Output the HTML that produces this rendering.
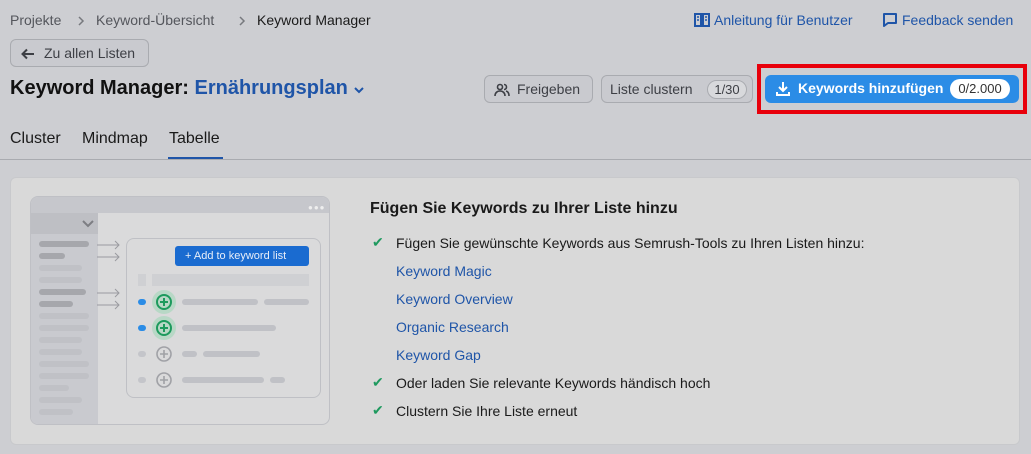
<!DOCTYPE html>
<html><head><meta charset="utf-8"><style>
*{box-sizing:border-box;margin:0;padding:0}
body{width:1031px;height:454px;background:#cdced2;font-family:"Liberation Sans",sans-serif;color:#1a1a1a;position:relative;overflow:hidden}
.a{position:absolute;white-space:nowrap}
.bc{font-size:14px;color:#54565c;top:12px}
.btn{position:absolute;border:1px solid #a9abb0;border-radius:6px;background:#c9cacf;font-size:14px;color:#3d3f45}
.chk{color:#1f9a5f;font-size:14px}
.lnk{color:#1f55a8;font-size:14px}
.bar{position:absolute;height:6px;border-radius:3px;background:#c0c1c6}
.dk{background:#a6a7ac}
</style></head><body>
<div class="a bc" style="left:10px">Projekte</div>
<svg class="a" style="left:77px;top:15px" width="8" height="12"><path d="M2 2l4 4-4 4" fill="none" stroke="#77797e" stroke-width="1.5"/></svg>
<div class="a bc" style="left:96px">Keyword-Übersicht</div>
<svg class="a" style="left:238px;top:15px" width="8" height="12"><path d="M2 2l4 4-4 4" fill="none" stroke="#77797e" stroke-width="1.5"/></svg>
<div class="a bc" style="left:257px;color:#1a1a1a">Keyword Manager</div>
<svg class="a" style="left:694px;top:12px" width="16" height="16" viewBox="0 0 16 16"><path d="M1 2h6v12H1zM9 2h6v12H9z" fill="none" stroke="#1f55a8" stroke-width="2"/><path d="M3 5h2M3 8h2M11 5h2M11 8h2" stroke="#1f55a8" stroke-width="1.5"/></svg>
<div class="a lnk" style="left:714px;top:12px">Anleitung für Benutzer</div>
<svg class="a" style="left:882px;top:12px" width="16" height="16" viewBox="0 0 16 16"><path d="M2 2h12v9H6l-4 3z" fill="none" stroke="#1f55a8" stroke-width="2" stroke-linejoin="round"/></svg>
<div class="a lnk" style="left:902px;top:12px">Feedback senden</div>
<div class="btn" style="left:10px;top:39px;width:139px;height:28px"><svg class="a" style="left:9px;top:6px" width="16" height="16" viewBox="0 0 16 16"><path d="M14 8H3M7 3.5L2.5 8 7 12.5" fill="none" stroke="#3d3f45" stroke-width="2"/></svg><span class="a" style="left:33px;top:5px">Zu allen Listen</span></div>
<div class="a" style="left:10px;top:77px;font-size:20px;font-weight:bold;color:#111">Keyword Manager: <span style="color:#1f55a8">Ernährungsplan</span></div>
<svg class="a" style="left:353px;top:85px" width="12" height="10"><path d="M2 3l4 4 4-4" fill="none" stroke="#1f55a8" stroke-width="2"/></svg>
<div class="btn" style="left:484px;top:75px;width:109px;height:28px"><svg class="a" style="left:9px;top:6px" width="16" height="16" viewBox="0 0 16 16" fill="none" stroke="#3d3f45" stroke-width="1.6"><circle cx="6" cy="5" r="2.5"/><path d="M1 14c0-3 2-5 5-5s5 2 5 5M10 2.5a2.5 2.5 0 010 5M12 9c2 .5 3 2.5 3 5"/></svg><span class="a" style="left:32px;top:5px">Freigeben</span></div>
<div class="btn" style="left:601px;top:75px;width:152px;height:28px"><span class="a" style="left:8px;top:5px">Liste clustern</span><span class="a" style="left:105px;top:4px;width:40px;height:19px;border:1px solid #a9abb0;border-radius:10px;background:#d8d9dc;font-size:13px;text-align:center;line-height:17px">1/30</span></div>
<div class="a" style="left:757px;top:64px;width:270px;height:50px;border:4px solid #e8000b"></div>
<div class="a" style="left:765px;top:75px;width:254px;height:28px;background:#2b8ce6;border-radius:6px"><svg class="a" style="left:10px;top:6px" width="16" height="16" viewBox="0 0 16 16" fill="none" stroke="#fff" stroke-width="2"><path d="M8 1v9M4 6l4 4 4-4M2 11v3h12v-3"/></svg><span class="a" style="left:33px;top:5px;color:#fff;font-weight:bold;font-size:14px">Keywords hinzufügen</span><span class="a" style="left:185px;top:4px;width:60px;height:20px;background:#fff;border-radius:10px;font-size:13px;text-align:center;line-height:20px;color:#333">0/2.000</span></div>
<div class="a" style="left:10px;top:130px;font-size:16px">Cluster</div>
<div class="a" style="left:82px;top:130px;font-size:16px">Mindmap</div>
<div class="a" style="left:169px;top:130px;font-size:16px">Tabelle</div>
<div class="a" style="left:168px;top:157px;width:55px;height:3px;background:#1f55a8"></div>
<div class="a" style="left:0;top:159px;width:1031px;height:1px;background:#a9abb0"></div>
<div class="a" style="left:10px;top:177px;width:1010px;height:268px;background:#d9d9d9;border:1px solid #c8c9cc;border-radius:6px"></div>
<div class="a" style="left:30px;top:196px;width:300px;height:229px;border:1px solid #bfc0c5;border-radius:8px;background:#dadadb;overflow:hidden">
 <div class="a" style="left:0;top:0;width:300px;height:16px;background:#c6c7cc"></div>
 <div class="a" style="left:277px;top:6px;font-size:8px;color:#eee;letter-spacing:1px">●●●</div>
 <div class="a" style="left:0;top:16px;width:67px;height:213px;background:#c9cacf"></div>
 <div class="a" style="left:0;top:16px;width:67px;height:21px;background:#bebfc4"></div>
 <svg class="a" style="left:51px;top:23px" width="12" height="8"><path d="M1 1l5 5 5-5" fill="none" stroke="#7d7e83" stroke-width="2"/></svg>
</div>
<div class="bar dk" style="left:39px;top:241px;width:50px"></div><div class="bar dk" style="left:39px;top:253px;width:26px"></div>
<div class="bar" style="left:39px;top:265px;width:43px"></div><div class="bar" style="left:39px;top:277px;width:43px"></div>
<div class="bar dk" style="left:39px;top:289px;width:47px"></div><div class="bar dk" style="left:39px;top:301px;width:34px"></div>
<div class="bar" style="left:39px;top:313px;width:50px"></div><div class="bar" style="left:39px;top:325px;width:50px"></div>
<div class="bar" style="left:39px;top:337px;width:43px"></div><div class="bar" style="left:39px;top:349px;width:43px"></div>
<div class="bar" style="left:39px;top:361px;width:50px"></div><div class="bar" style="left:39px;top:373px;width:50px"></div>
<div class="bar" style="left:39px;top:385px;width:30px"></div><div class="bar" style="left:39px;top:397px;width:43px"></div><div class="bar" style="left:39px;top:409px;width:34px"></div>
<svg class="a" style="left:97px;top:236px" width="25" height="75" stroke="#9a9ba0" fill="none"><path d="M0 9h22M18 5l4 4-4 4M0 21h22M18 17l4 4-4 4M0 57h22M18 53l4 4-4 4M0 69h22M18 65l4 4-4 4"/></svg>
<div class="a" style="left:126px;top:238px;width:195px;height:160px;border:1px solid #bfc0c5;border-radius:8px"></div>
<div class="a" style="left:175px;top:246px;width:134px;height:20px;background:#1a6bd0;border-radius:3px;color:#e8eef8;font-size:11px;line-height:20px;padding-left:10px">+ Add to keyword list</div>
<div class="a" style="left:138px;top:274px;width:8px;height:12px;background:#cfd0d3"></div>
<div class="a" style="left:152px;top:274px;width:157px;height:12px;background:#cfd0d3"></div>
<div class="a" style="left:138px;top:299px;width:8px;height:6px;border-radius:3px;background:#2b8ce6"></div>
<div class="a" style="left:138px;top:325px;width:8px;height:6px;border-radius:3px;background:#2b8ce6"></div>
<div class="a" style="left:138px;top:351px;width:8px;height:6px;border-radius:3px;background:#c4c5ca"></div>
<div class="a" style="left:138px;top:377px;width:8px;height:6px;border-radius:3px;background:#c4c5ca"></div>
<svg class="a" style="left:152px;top:290px" width="24" height="100"><circle cx="12" cy="12" r="12" fill="#b8d8c6"/><circle cx="12" cy="12" r="7" fill="none" stroke="#1d9a5d" stroke-width="2"/><path d="M12 8v8M8 12h8" stroke="#1d9a5d" stroke-width="2"/><circle cx="12" cy="38" r="12" fill="#b8d8c6"/><circle cx="12" cy="38" r="7" fill="none" stroke="#1d9a5d" stroke-width="2"/><path d="M12 34v8M8 38h8" stroke="#1d9a5d" stroke-width="2"/><circle cx="12" cy="64" r="7" fill="none" stroke="#a0a1a6" stroke-width="1.6"/><path d="M12 60v8M8 64h8" stroke="#a0a1a6" stroke-width="1.6"/><circle cx="12" cy="90" r="7" fill="none" stroke="#a0a1a6" stroke-width="1.6"/><path d="M12 86v8M8 90h8" stroke="#a0a1a6" stroke-width="1.6"/></svg>
<div class="bar" style="left:182px;top:299px;width:76px"></div><div class="bar" style="left:264px;top:299px;width:45px"></div>
<div class="bar" style="left:182px;top:325px;width:94px"></div>
<div class="bar" style="left:182px;top:351px;width:15px"></div><div class="bar" style="left:203px;top:351px;width:57px"></div>
<div class="bar" style="left:182px;top:377px;width:82px"></div><div class="bar" style="left:270px;top:377px;width:15px"></div>
<div class="a" style="left:370px;top:200px;font-size:16px;font-weight:bold">Fügen Sie Keywords zu Ihrer Liste hinzu</div>
<div class="a chk" style="left:372px;top:234px">✔</div><div class="a" style="left:396px;top:235px;font-size:14px">Fügen Sie gewünschte Keywords aus Semrush-Tools zu Ihren Listen hinzu:</div>
<div class="a lnk" style="left:396px;top:263px">Keyword Magic</div>
<div class="a lnk" style="left:396px;top:291px">Keyword Overview</div>
<div class="a lnk" style="left:396px;top:319px">Organic Research</div>
<div class="a lnk" style="left:396px;top:347px">Keyword Gap</div>
<div class="a chk" style="left:372px;top:374px">✔</div><div class="a" style="left:396px;top:375px;font-size:14px">Oder laden Sie relevante Keywords händisch hoch</div>
<div class="a chk" style="left:372px;top:402px">✔</div><div class="a" style="left:396px;top:403px;font-size:14px">Clustern Sie Ihre Liste erneut</div>
</body></html>
